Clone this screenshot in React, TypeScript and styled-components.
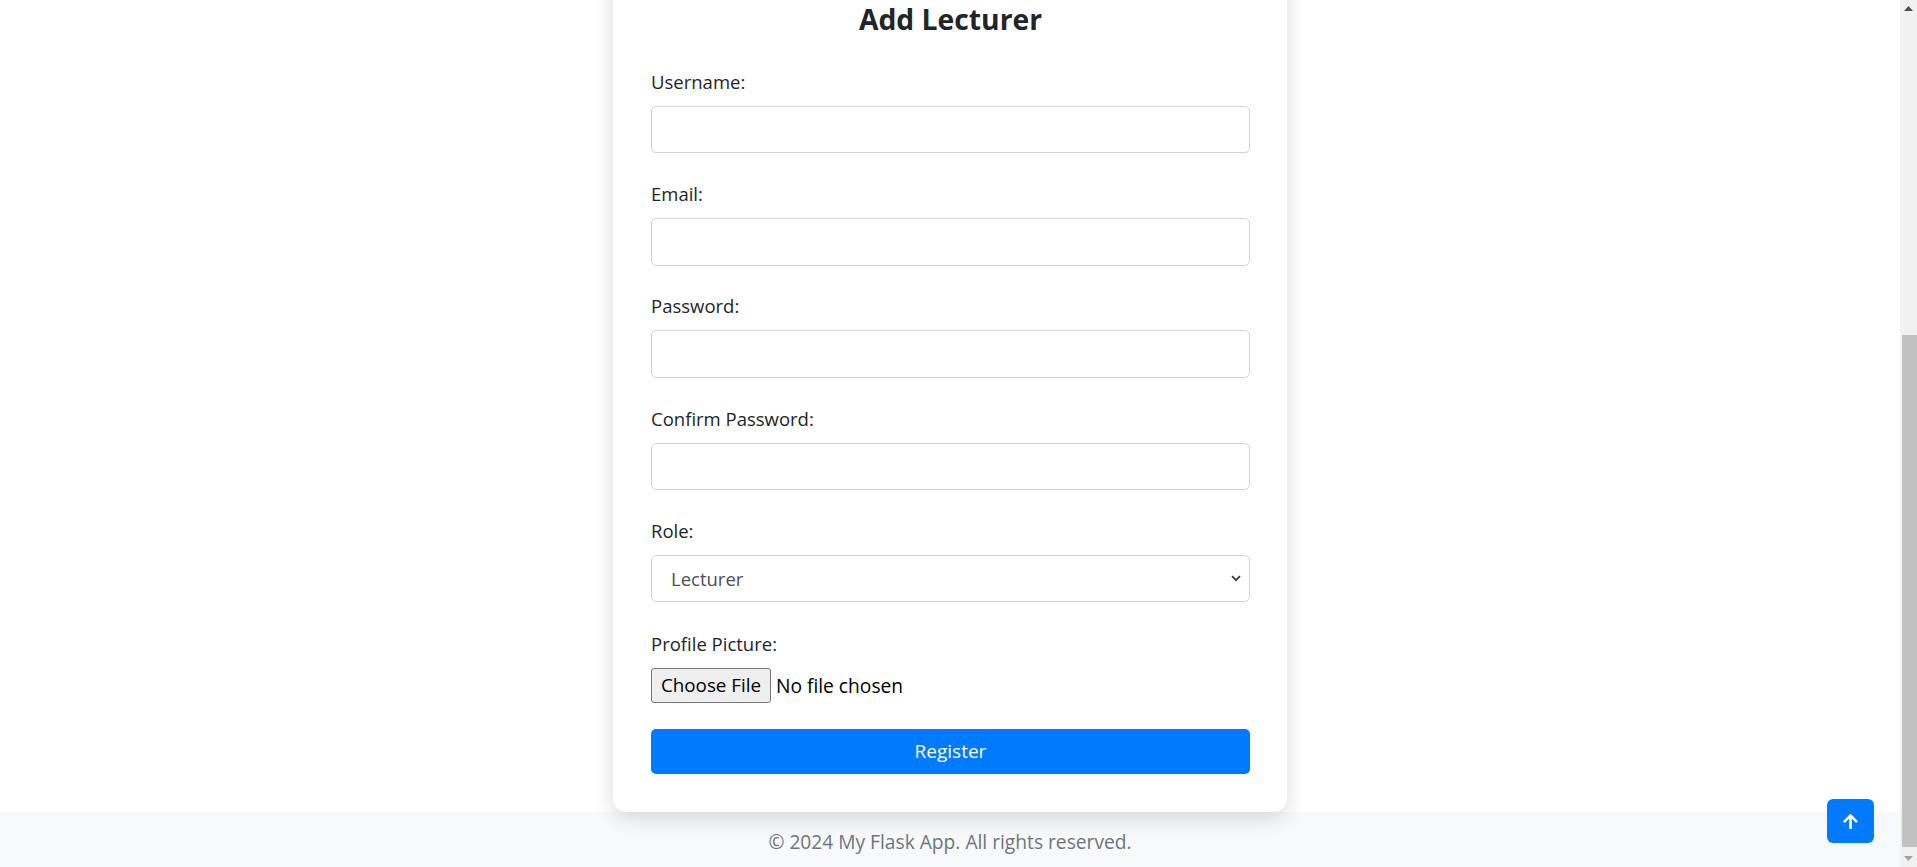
import React from "react";
import styled, { createGlobalStyle } from "styled-components";
import { FaArrowUp } from "react-icons/fa";

const FONT = `"Open Sans", "Noto Sans", "Liberation Sans", sans-serif`;

const GlobalStyle = createGlobalStyle`
  html, body {
    margin: 0;
    padding: 0;
    height: 100%;
    overflow: hidden;
    font-family: ${FONT};
    color: #212529;
  }
  #root { height: 100%; }
  * { box-sizing: border-box; }
`;

const Screen = styled.div`
  display: flex;
  width: 100vw;
  height: 100vh;
`;

const Viewport = styled.div`
  flex: 1;
  min-width: 0;
  display: flex;
  flex-direction: column;
  justify-content: flex-end;
  overflow: hidden;
  background: #fff;
`;

const Main = styled.main`
  display: flex;
  justify-content: center;
  padding-top: 480px;
`;

const Card = styled.div`
  position: relative;
  z-index: 1;
  width: 674px;
  background: #fff;
  border-radius: 14px;
  padding: 37px 37px 38.5px 38px;
  box-shadow: 0 6px 20px rgba(0, 0, 0, 0.14);
`;

const Title = styled.h3`
  margin: 0 0 30px;
  text-align: center;
  font-size: 28.3px;
  line-height: 36px;
  font-weight: 700;
  color: #212529;
`;

const Group = styled.div<{ $gap?: number }>`
  margin-bottom: ${(p) => p.$gap ?? 25.8}px;
`;

const Label = styled.label`
  display: block;
  font-size: 18.5px;
  line-height: 30px;
  margin-bottom: 9px;
  color: #212529;
`;

const Input = styled.input`
  display: block;
  width: 100%;
  height: 47.5px;
  border: 1px solid #ced4da;
  border-radius: 5px;
  padding: 0 15px;
  font-family: ${FONT};
  font-size: 18.5px;
  color: #495057;
  background: #fff;
  outline: none;
`;

const SelectBox = styled.div`
  display: flex;
  align-items: center;
  height: 47px;
  border: 1px solid #ced4da;
  border-radius: 5px;
  padding: 0 8px 0 19px;
  background: #fff;
`;

const NativeSelect = styled.select`
  flex: 1;
  appearance: none;
  border: none;
  outline: none;
  background: transparent;
  font-family: ${FONT};
  font-size: 18.5px;
  color: #495057;
  padding: 0;
`;

const FileRow = styled.div`
  display: flex;
  align-items: center;
  height: 35px;
`;

const FileButton = styled.span`
  display: inline-flex;
  align-items: center;
  justify-content: center;
  height: 35px;
  width: 120px;
  background: #efefef;
  border: 1px solid #767676;
  border-radius: 3px;
  font-size: 18.8px;
  color: #000;
`;

const FileName = styled.span`
  margin-left: 5px;
  font-size: 19.2px;
  color: #000;
`;

const SubmitButton = styled.button`
  display: block;
  width: 100%;
  height: 45px;
  border: none;
  border-radius: 5px;
  background: #007bff;
  color: #fff;
  font-family: ${FONT};
  font-size: 19px;
  cursor: pointer;
`;

const Footer = styled.footer`
  height: 55px;
  flex-shrink: 0;
  display: flex;
  align-items: center;
  justify-content: center;
  padding-top: 3px;
  background: #f8f9fa;
  color: #6c757d;
  font-size: 19.2px;
`;

const Scrollbar = styled.div`
  width: 17px;
  flex-shrink: 0;
  display: flex;
  flex-direction: column;
  background: #f1f1f1;
`;

const ScrollArrow = styled.div`
  height: 17px;
  display: flex;
  align-items: center;
  justify-content: center;
`;

const Track = styled.div`
  flex: 1;
  display: flex;
  flex-direction: column;
  justify-content: flex-end;
  padding: 0 0 3px 2px;
`;

const Thumb = styled.div`
  height: 512px;
  background: #c1c1c1;
`;

const BackToTop = styled.button`
  position: fixed;
  right: 43px;
  bottom: 24px;
  width: 47px;
  height: 44px;
  border: none;
  border-radius: 6px;
  background: #007bff;
  color: #fff;
  display: flex;
  align-items: center;
  justify-content: center;
  padding: 0;
  cursor: pointer;
`;

const fields = [
  { id: "username", label: "Username:", type: "text" },
  { id: "email", label: "Email:", type: "email" },
  { id: "password", label: "Password:", type: "password" },
  { id: "confirm", label: "Confirm Password:", type: "password" },
];

export default function App() {
  return (
    <>
      <GlobalStyle />
      <Screen>
        <Viewport>
          <Main>
            <Card>
              <Title>Add Lecturer</Title>
              {fields.map((f) => (
                <Group key={f.id}>
                  <Label htmlFor={f.id}>{f.label}</Label>
                  <Input id={f.id} type={f.type} />
                </Group>
              ))}
              <Group $gap={26.5}>
                <Label htmlFor="role">Role:</Label>
                <SelectBox>
                  <NativeSelect id="role" defaultValue="lecturer">
                    <option value="lecturer">Lecturer</option>
                  </NativeSelect>
                  <svg width="10" height="7" viewBox="0 0 10 7">
                    <path d="M1 1.2 L5 5.2 L9 1.2" fill="none" stroke="#3c3c3c" strokeWidth="1.8" />
                  </svg>
                </SelectBox>
              </Group>
              <Group $gap={26}>
                <Label>Profile Picture:</Label>
                <FileRow>
                  <FileButton>Choose File</FileButton>
                  <FileName>No file chosen</FileName>
                </FileRow>
              </Group>
              <SubmitButton type="button">Register</SubmitButton>
            </Card>
          </Main>
          <Footer>© 2024 My Flask App. All rights reserved.</Footer>
        </Viewport>
        <Scrollbar>
          <ScrollArrow>
            <svg width="9" height="5" viewBox="0 0 9 5">
              <path d="M0 5 L4.5 0 L9 5 Z" fill="#505050" />
            </svg>
          </ScrollArrow>
          <Track>
            <Thumb />
          </Track>
          <ScrollArrow>
            <svg width="9" height="5" viewBox="0 0 9 5">
              <path d="M0 0 L4.5 5 L9 0 Z" fill="#a3a3a3" />
            </svg>
          </ScrollArrow>
        </Scrollbar>
        <BackToTop type="button" aria-label="Back to top">
          <FaArrowUp size={17} />
        </BackToTop>
      </Screen>
    </>
  );
}
